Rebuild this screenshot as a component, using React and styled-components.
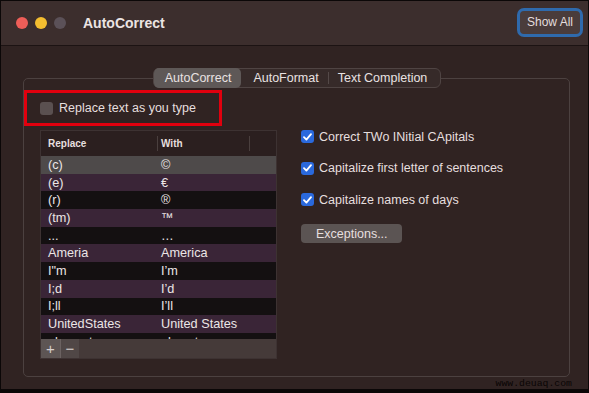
import React from "react";
import styled, { createGlobalStyle } from "styled-components";

const GlobalStyle = createGlobalStyle`
  html, body { margin: 0; padding: 0; background: #0b0707; }
  body { font-family: "Liberation Sans", Arial, sans-serif; }
  * { box-sizing: border-box; }
`;

const replacements = [
  ["(c)", "©"],
  ["(e)", "€"],
  ["(r)", "®"],
  ["(tm)", "™"],
  ["...", "…"],
  ["Ameria", "America"],
  ["I\"m", "I’m"],
  ["I;d", "I’d"],
  ["I;ll", "I’ll"],
  ["UnitedStates", "United States"],
  ["ulemost", "ulmost"],
];

const options = [
  "Correct TWo INitial CApitals",
  "Capitalize first letter of sentences",
  "Capitalize names of days",
];

const Check = () => (
  <svg width="9" height="8" viewBox="0 0 9 8">
    <path d="M1 4.2 L3.4 6.6 L8 1.2" fill="none" stroke="#fff" strokeWidth="1.8" strokeLinecap="round" strokeLinejoin="round" />
  </svg>
);

const App = () => {
  return (
    <Window>
      <GlobalStyle />
      <TitleBar>
        <Light color="#ee5e58" />
        <Light color="#f4be30" />
        <Light color="#5b5158" />
        <Title>AutoCorrect</Title>
        <ShowAll>Show All</ShowAll>
      </TitleBar>
      <Content>
        <Tabs>
          <Tab active pl={11} pr={10}>AutoCorrect</Tab>
          <Tab pl={12} pr={9}>AutoFormat</Tab>
          <Tab divider pl={10} pr={13}>Text Completion</Tab>
        </Tabs>
        <Group>
          <ReplaceRow>
            <Box />
            <Label>Replace text as you type</Label>
          </ReplaceRow>
          <Body>
            <Table>
              <HeaderRow>
                <HeadCell>Replace</HeadCell>
                <HeadCell line>With</HeadCell>
                <HeadCell line />
              </HeaderRow>
              <Rows>
                {replacements.map(([from, to], i) => (
                  <Row key={from} index={i}>
                    <Cell>{from}</Cell>
                    <Cell second>{to}</Cell>
                  </Row>
                ))}
              </Rows>
              <Footer>
                <SmallButton>+</SmallButton>
                <SmallButton minus>−</SmallButton>
              </Footer>
            </Table>
            <Options>
              {options.map((opt) => (
                <OptionRow key={opt}>
                  <Box checked>
                    <Check />
                  </Box>
                  <Label>{opt}</Label>
                </OptionRow>
              ))}
              <Exceptions>Exceptions...</Exceptions>
            </Options>
          </Body>
        </Group>
      </Content>
      <Watermark>www.deuaq.com</Watermark>
    </Window>
  );
};

export default App;

const Window = styled.div`
  position: relative;
  width: 589px;
  height: 393px;
  display: flex;
  flex-direction: column;
  background: #302322;
  border: 1px solid #0b0707;
  border-bottom-width: 4px;
  overflow: hidden;
`;

const TitleBar = styled.div`
  height: 45px;
  flex-shrink: 0;
  display: flex;
  align-items: center;
  padding: 0 5px 0 15px;
  gap: 7px;
  background: #3c2e2d;
  border-bottom: 1px solid #1c1313;
`;

const Light = styled.span`
  width: 12px;
  height: 12px;
  border-radius: 50%;
  background: ${(p) => p.color};
`;

const Title = styled.span`
  margin-left: 10px;
  font-size: 14px;
  font-weight: bold;
  color: #ebe4e3;
`;

const ShowAll = styled.div`
  margin-left: auto;
  width: 66px;
  height: 29px;
  margin-top: -2px;
  display: flex;
  align-items: center;
  justify-content: center;
  border: 3px solid #2f6aac;
  border-radius: 7px;
  background: #4a3c3b;
  color: #e4dddd;
  font-size: 12px;
`;

const Content = styled.div`
  flex: 1;
  padding: 22px 18px 0 22px;
  display: flex;
  flex-direction: column;
`;

const Tabs = styled.div`
  position: relative;
  z-index: 1;
  align-self: center;
  margin-left: 1px;
  height: 20px;
  display: flex;
  border: 1px solid #4f4443;
  border-radius: 6px;
  background: #362a29;
  margin-bottom: -10px;
`;

const Tab = styled.div`
  display: flex;
  align-items: center;
  padding: 0 ${(p) => p.pr}px 0 ${(p) => p.pl}px;
  font-size: 12.5px;
  color: #e9e2e2;
  border-radius: 5px;
  margin: -1px 0;
  background: ${(p) => (p.active ? "#5e5857" : "transparent")};
  position: relative;
  &::before {
    content: "";
    display: ${(p) => (p.divider ? "block" : "none")};
    position: absolute;
    left: 0;
    top: 4px;
    bottom: 4px;
    width: 1px;
    background: #544948;
  }
`;

const Group = styled.div`
  height: 299px;
  border: 1px solid #4c4140;
  border-radius: 5px;
  padding-top: 11px;
  display: flex;
  flex-direction: column;
`;

const ReplaceRow = styled.div`
  width: 198px;
  height: 36px;
  display: flex;
  align-items: center;
  gap: 6px;
  padding-left: 13px;
  border: 3px solid #e1000e;
`;

const Box = styled.span`
  width: 13px;
  height: 13px;
  flex-shrink: 0;
  display: flex;
  align-items: center;
  justify-content: center;
  border-radius: 3px;
  background: ${(p) => (p.checked ? "#2a69dd" : "#5a5050")};
`;

const Label = styled.span`
  font-size: 12.5px;
  color: #e6dfdf;
  white-space: nowrap;
`;

const Body = styled.div`
  display: flex;
  margin-top: 4px;
`;

const Table = styled.div`
  margin-left: 16px;
  width: 237px;
  height: 229px;
  display: flex;
  flex-direction: column;
  border: 1px solid #3d3232;
  background: #2b1f1f;
`;

const HeaderRow = styled.div`
  height: 25px;
  flex-shrink: 0;
  display: grid;
  grid-template-columns: 116px 92px 1fr;
  align-items: center;
`;

const HeadCell = styled.div`
  height: 15px;
  display: flex;
  align-items: center;
  padding-left: ${(p) => (p.line ? "3px" : "7px")};
  border-left: ${(p) => (p.line ? "1px solid #4a3f3e" : "none")};
  font-size: 10px;
  font-weight: bold;
  color: #e6dfdf;
`;

const Rows = styled.div`
  flex: 1;
  overflow: hidden;
`;

const rowColors = ["#4e4a4a", "#3a2537", "#141011"];

const Row = styled.div`
  height: 17.7px;
  display: grid;
  grid-template-columns: 116px 1fr;
  align-items: center;
  overflow: hidden;
  background: ${(p) => (p.index === 0 ? rowColors[0] : p.index % 2 ? rowColors[1] : rowColors[2])};
`;

const Cell = styled.div`
  padding-left: ${(p) => (p.second ? "4px" : "7px")};
  font-size: 12.7px;
  color: #ece6e6;
  white-space: nowrap;
`;

const Footer = styled.div`
  height: 19px;
  flex-shrink: 0;
  display: flex;
  background: #453a39;
`;

const SmallButton = styled.div`
  width: 19px;
  display: flex;
  align-items: center;
  justify-content: center;
  background: ${(p) => (p.minus ? "#504746" : "#5d5554")};
  border-left: ${(p) => (p.minus ? "1px solid #6b6261" : "none")};
  color: #d8d1d0;
  font-size: 15px;
  line-height: 1;
`;

const Options = styled.div`
  margin-left: 24px;
  display: flex;
  flex-direction: column;
  align-items: flex-start;
  gap: 18.5px;
`;

const OptionRow = styled.div`
  height: 13px;
  display: flex;
  align-items: center;
  gap: 5px;
`;

const Exceptions = styled.div`
  margin-top: -0.5px;
  width: 101px;
  height: 19px;
  display: flex;
  align-items: center;
  padding-left: 15px;
  border-radius: 4px;
  background: #5b5453;
  color: #e6dfdf;
  font-size: 12.5px;
`;

const Watermark = styled.span`
  position: absolute;
  right: 16px;
  bottom: 0;
  line-height: 10px;
  font-family: "Liberation Mono", monospace;
  font-size: 9.8px;
  color: #0a0505;
`;
